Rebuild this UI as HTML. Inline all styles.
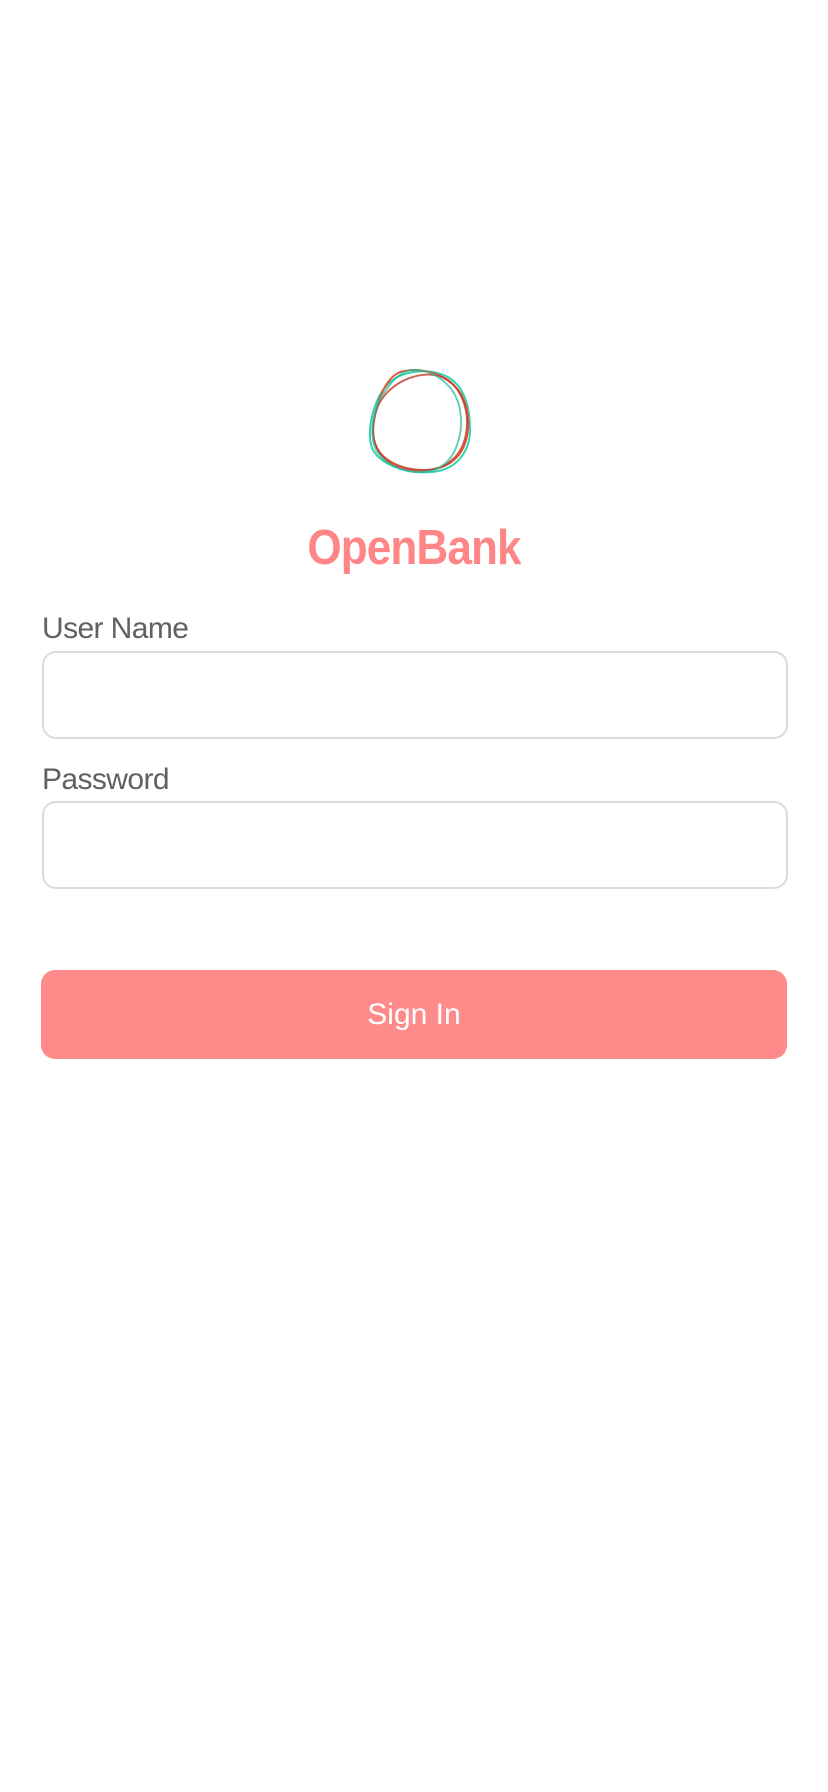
<!DOCTYPE html>
<html><head><meta charset="utf-8"><style>
html,body{margin:0;padding:0;background:#fff;width:828px;height:1792px;overflow:hidden;font-family:"Liberation Sans",sans-serif;}
.abs{position:absolute;}
.lbl{position:absolute;left:42px;color:#616161;font-size:30px;letter-spacing:-0.6px;}
.box{position:absolute;left:42px;width:742px;height:84px;border:2px solid #dcdcdc;border-radius:14px;}
</style></head><body>
<svg class="abs" style="left:366px;top:366px" width="108" height="110" viewBox="0 0 108 110" fill="none" stroke-width="2">
<path d="M22 18 C36 4 62 2 80 10 C100 20 104 44 104 64 C104 86 90 104 66 106 C44 108 14 100 6 82 C0 64 8 32 22 18Z" stroke="#2fd4b0"/>
<path d="M34 6 C54 0 84 8 96 30 C106 50 104 78 90 92 C76 106 50 108 30 100 C12 92 4 74 8 54 C12 32 20 12 34 6Z" stroke="#e8553a"/>
<path d="M12 40 C22 18 50 4 74 10 C96 18 104 46 100 68 C96 90 80 104 58 104 C36 104 12 94 8 74 C6 62 8 50 12 40Z" stroke="#c0392b" opacity=".8"/>
<path d="M44 4 C68 2 90 20 94 44 C98 68 90 96 68 104 C46 110 20 102 10 84 C2 66 8 40 20 24 C28 12 36 6 44 4Z" stroke="#26b99a" opacity=".7"/>
</svg>
<div class="abs" style="left:0;width:828px;top:520px;text-align:center;color:#fe8686;font-weight:bold;font-size:49px;letter-spacing:-1px;transform:scaleX(0.9);">OpenBank</div>
<div class="lbl" style="top:612px">User Name</div>
<div class="box" style="top:651px"></div>
<div class="lbl" style="top:763px">Password</div>
<div class="box" style="top:801px"></div>
<div class="abs" style="left:41px;top:970px;width:746px;height:89px;border-radius:14px;background:#ff8a8a;color:#fff;font-size:30px;line-height:89px;text-align:center;">Sign In</div>
</body></html>
